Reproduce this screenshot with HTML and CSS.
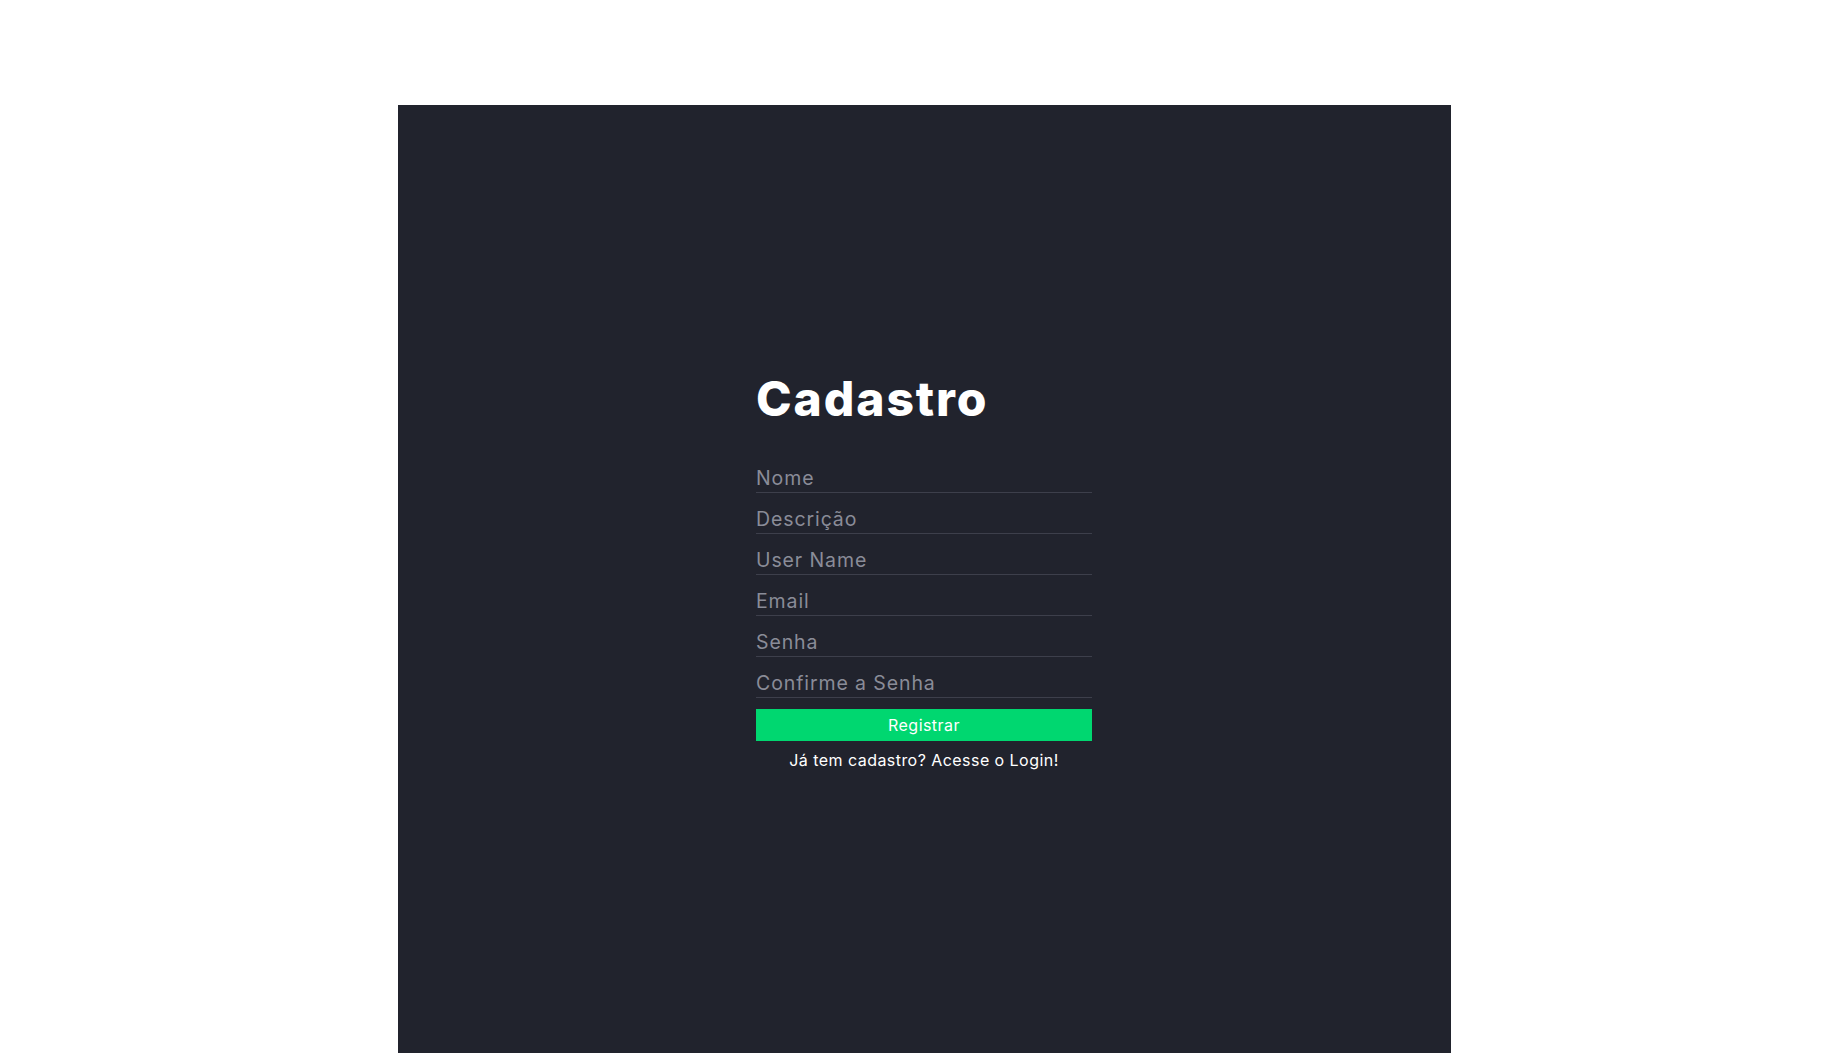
FILE: index.html
```html
<!DOCTYPE html>
<html lang="pt-BR">
<head>
<meta charset="utf-8">
<title>Cadastro</title>
<link rel="stylesheet" href="styles.css">
</head>
<body>
<main class="panel">
  <form class="form">
    <h1 class="title">Cadastro</h1>
    <input class="field" type="text" placeholder="Nome">
    <input class="field" type="text" placeholder="Descrição">
    <input class="field" type="text" placeholder="User Name">
    <input class="field" type="email" placeholder="Email">
    <input class="field" type="password" placeholder="Senha">
    <input class="field" type="password" placeholder="Confirme a Senha">
    <button class="submit" type="button">Registrar</button>
    <a class="login-link" href="#">Já tem cadastro? Acesse o Login!</a>
  </form>
</main>
</body>
</html>
```

FILE: styles.css
```css
* { box-sizing: border-box; }

html, body {
  margin: 0;
  padding: 0;
  background: #ffffff;
  overflow: hidden;
}

body {
  font-family: Inter, "Open Sans", sans-serif;
}

.panel {
  width: 1053px;
  height: 948px;
  margin: 105px auto 0;
  background: #21232d;
  display: flex;
  justify-content: center;
  padding-top: 265px;
}

.form {
  width: 336px;
  display: flex;
  flex-direction: column;
}

.title {
  margin: 0 0 24px;
  font-size: 48px;
  line-height: 58px;
  font-weight: 800;
  color: #ffffff;
  letter-spacing: 1.9px;
}

.field {
  display: block;
  width: 100%;
  margin: 0;
  padding: 14px 0 2px;
  line-height: 24px;
  height: 41px;
  border: none;
  border-bottom: 1px solid #3d3f4b;
  background: transparent;
  color: #e8e8ee;
  font-family: inherit;
  font-size: 19.5px;
  letter-spacing: 0.9px;
  outline: none;
}

.field::placeholder {
  color: #8a8c98;
}

.submit {
  margin-top: 11px;
  height: 32px;
  border: none;
  background: #00d770;
  color: #ffffff;
  font-family: inherit;
  font-size: 16px;
  letter-spacing: 0.45px;
  padding: 0;
  cursor: pointer;
}

.login-link {
  margin-top: 7px;
  text-align: center;
  color: #ffffff;
  font-size: 16px;
  line-height: 24px;
  letter-spacing: 0.45px;
  text-decoration: none;
}
```
